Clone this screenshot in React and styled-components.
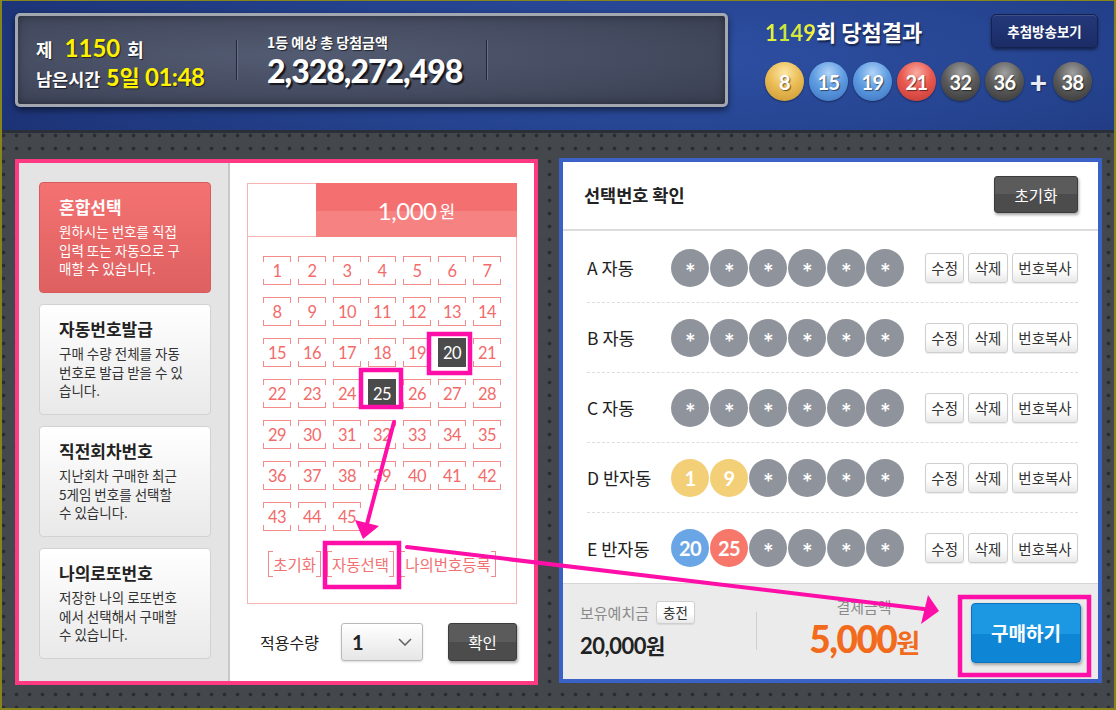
import React from 'react';
import styled, { createGlobalStyle } from 'styled-components';

const KR = `"Noto Sans CJK KR", "Noto Sans", sans-serif`;
const NUM = `Lato, "Noto Sans CJK KR", sans-serif`;

const GlobalStyle = createGlobalStyle`
  html, body { margin: 0; padding: 0; background: #44484d; }
  body { font-family: ${KR}; }
  *, *::before, *::after { box-sizing: border-box; }
  button { font-family: ${KR}; cursor: pointer; }
`;

const Frame = styled.div`
  position: relative;
  width: 1116px;
  height: 710px;
  overflow: hidden;
  border-style: solid;
  border-color: #85851c;
  border-width: 1px 2px 2px 2px;
  background-color: #44484d;
  background-image: radial-gradient(circle at center, #2a2d31 0 1.5px, transparent 2.3px);
  background-size: 13px 13px;
  background-position: -5px -2px;
  display: flex;
  flex-direction: column;
`;

/* ---------------- Header ---------------- */
const Header = styled.header`
  height: 132px;
  flex: none;
  border-bottom: 3px solid #2b2f37;
  background: radial-gradient(ellipse 70% 130% at 62% 45%, #2e50a3 0%, #25438f 50%, #1c3275 100%);
  display: flex;
  align-items: flex-start;
  padding: 12px 16px 0 13px;
`;

const Board = styled.div`
  width: 713px;
  height: 94px;
  border: 3px solid #a3a7b0;
  border-radius: 5px;
  background: radial-gradient(ellipse at 40% 45%, #535b72 0%, #454c61 55%, #393e50 100%);
  box-shadow: 0 3px 7px rgba(0, 0, 0, 0.55), inset 0 0 8px rgba(0, 0, 0, 0.35);
  display: flex;
  align-items: center;
  padding-left: 18px;
`;

const RoundBlock = styled.div`
  width: 200px;
  display: flex;
  flex-direction: column;
  color: #fff;
  font-weight: 700;
  text-shadow: 1px 1px 1px rgba(0, 0, 0, 0.6);
`;

const BoardLine = styled.div`
  display: flex;
  align-items: baseline;
  height: 27px;
  line-height: 27px;
  white-space: nowrap;
`;

const BoardLabel = styled.span`
  font: 700 ${p => p.$size || 17}px ${KR};
  color: #fff;
  margin-right: ${p => p.$mr || 0}px;
`;

const Yellow = styled.span`
  font: 700 ${p => p.$size}px ${NUM};
  color: #fff200;
  margin-right: ${p => p.$mr || 0}px;
  letter-spacing: ${p => p.$ls || 0}px;
`;

const YellowKr = styled.span`
  font: 700 ${p => p.$size}px ${KR};
  color: #fff200;
`;

const BoardDivider = styled.div`
  width: 2px;
  height: 40px;
  background: linear-gradient(to right, #22263a 50%, #6a7084 50%);
  flex: none;
`;

const PrizeBlock = styled.div`
  width: 248px;
  padding-left: 29px;
  display: flex;
  flex-direction: column;
  color: #fff;
`;

const PrizeLabel = styled.div`
  font: 700 14px ${KR};
  line-height: 20px;
  text-shadow: 1px 1px 1px rgba(0, 0, 0, 0.6);
`;

const PrizeAmount = styled.div`
  font: 900 32px ${NUM};
  letter-spacing: -1px;
  line-height: 36px;
  margin-top: 1px;
  text-shadow: 2px 2px 1px #15171f;
`;

const ResultArea = styled.div`
  margin-left: 37px;
  flex: 1;
  display: flex;
  flex-direction: column;
`;

const ResultTop = styled.div`
  height: 35px;
  display: flex;
  align-items: center;
  justify-content: space-between;
`;

const ResultTitle = styled.div`
  font: 700 22px ${KR};
  color: #fff;
  line-height: 30px;
  text-shadow: 1px 2px 2px rgba(0, 0, 0, 0.55);
  white-space: nowrap;
`;

const RoundNo = styled.span`
  font: 700 22px ${NUM};
  background: linear-gradient(to right, #f3f53a, #c6e63a 40%, #f7f23a);
  -webkit-background-clip: text;
  background-clip: text;
  color: transparent;
  text-shadow: none;
`;

const BroadcastBtn = styled.button`
  width: 107px;
  height: 34px;
  border: 1px solid #15224f;
  border-radius: 5px;
  background: linear-gradient(#24387a, #1b2c66);
  color: #fff;
  font-weight: 700;
  font-size: 13.5px;
  box-shadow: 0 2px 3px rgba(0, 0, 0, 0.45), inset 0 1px 0 rgba(255, 255, 255, 0.12);
  padding: 0;
`;

const BallRow = styled.div`
  margin-top: 14px;
  display: flex;
  align-items: center;
  gap: 5px;
`;

const ballBg = {
  gold: 'radial-gradient(circle at 50% 28%, #fde6a6 0%, #ebbd56 45%, #c8942e 100%)',
  blue: 'radial-gradient(circle at 50% 28%, #b2d4f7 0%, #5f9de2 45%, #3a71bf 100%)',
  red: 'radial-gradient(circle at 50% 28%, #f9aca2 0%, #e95950 45%, #c13733 100%)',
  gray: 'radial-gradient(circle at 50% 28%, #a0a0a0 0%, #5a5a5a 48%, #333 100%)',
};

const WinBall = styled.div`
  width: 39px;
  height: 39px;
  border-radius: 50%;
  background: ${p => ballBg[p.$c]};
  box-shadow: 0 1px 2px rgba(0, 0, 0, 0.4);
  display: flex;
  align-items: center;
  justify-content: center;
  font: 700 20px ${NUM};
  color: #fff;
  letter-spacing: -0.5px;
  text-shadow: 1px 1px 1px rgba(0, 0, 0, 0.55);
`;

const Plus = styled.div`
  width: 19px;
  text-align: center;
  font: 900 30px ${NUM};
  line-height: 30px;
  color: #e8ecf5;
  text-shadow: 1px 1px 1px rgba(0, 0, 0, 0.4);
`;

/* ---------------- Main ---------------- */
const Main = styled.main`
  flex: 1;
  display: flex;
  align-items: flex-start;
  gap: 21px;
  padding: 25px 0 0 13px;
`;

const LeftPanel = styled.section`
  margin-top: 1px;
  width: 523px;
  height: 526px;
  border: 4px solid #ff3a82;
  display: flex;
  background: #fff;
`;

const MenuColumn = styled.nav`
  width: 211px;
  flex: none;
  background: #e4e4e4;
  border-right: 2px solid #c8c8c8;
  display: flex;
  flex-direction: column;
  gap: 11px;
  padding: 19px 0 0 20px;
`;

const MenuCard = styled.div`
  width: 172px;
  height: 111px;
  border-radius: 4px;
  border: 1px solid ${p => (p.$active ? '#d85a5a' : '#d2d2d2')};
  background: ${p =>
    p.$active
      ? 'linear-gradient(#f47272, #de6060)'
      : 'linear-gradient(#ffffff, #e9e9e9)'};
  padding: 12px 0 0 19px;
  color: ${p => (p.$active ? '#fff' : '#222')};
`;

const MenuTitle = styled.div`
  font: 700 17px ${KR};
  line-height: 24px;
`;

const MenuDesc = styled.div`
  margin-top: 3px;
  font: 400 13.5px ${KR};
  line-height: 18.5px;
  white-space: nowrap;
  color: ${p => (p.$active ? '#fff' : '#333')};
`;

const PickColumn = styled.div`
  flex: 1;
  background: #fff;
  padding: 20px 17px 0 17px;
  display: flex;
  flex-direction: column;
`;

const PickBox = styled.div`
  height: 421px;
  border: 1px solid #f8b3b3;
  display: flex;
  flex-direction: column;
`;

const PickHead = styled.div`
  height: 53px;
  display: flex;
  border-bottom: 1px solid #f8b3b3;
`;

const PickTabBlank = styled.div`
  width: 68px;
`;

const PriceTab = styled.div`
  flex: 1;
  margin: -1px -1px -1px 0;
  background: linear-gradient(#f47070 0 52%, #f68282 52% 100%);
  display: flex;
  align-items: center;
  justify-content: center;
  color: #fff;
`;

const PriceNum = styled.span`
  font: 400 24px ${NUM};
  letter-spacing: -0.5px;
`;

const PriceUnit = styled.span`
  font: 400 17px ${KR};
  margin-left: 3px;
`;

const NumGrid = styled.div`
  margin-top: 19px;
  display: grid;
  grid-template-columns: repeat(7, 28px);
  grid-auto-rows: 29px;
  column-gap: 7px;
  row-gap: 12px;
  justify-content: center;
`;

const Cell = styled.div`
  position: relative;
  display: flex;
  align-items: center;
  justify-content: center;
  font: 400 16.5px ${NUM};
  letter-spacing: -0.5px;
  color: ${p => (p.$on ? '#fff' : '#f26b6b')};
  background: ${p => (p.$on ? '#4b4b4b' : 'transparent')};
  &::before,
  &::after {
    content: '';
    position: absolute;
    left: 0;
    right: 0;
    height: 6px;
    border: 1px solid #f48c8c;
    display: ${p => (p.$on ? 'none' : 'block')};
  }
  &::before { top: 0; border-bottom: none; }
  &::after { bottom: 0; border-top: none; }
`;

const BracketRow = styled.div`
  margin-top: 20px;
  display: flex;
  justify-content: center;
  gap: 6px;
`;

const BracketBtn = styled.button`
  position: relative;
  height: 26px;
  padding: 0 5px;
  border: 0;
  background: none;
  font: 400 15.5px ${KR};
  line-height: 26px;
  color: #f07272;
  &::before,
  &::after {
    content: '';
    position: absolute;
    top: 0;
    bottom: 0;
    width: 5px;
    border: 1px solid #f38a8a;
  }
  &::before { left: 0; border-right: none; }
  &::after { right: 0; border-left: none; }
`;

const QtyRow = styled.div`
  margin-top: 19px;
  height: 38px;
  display: flex;
  align-items: center;
  padding-left: 13px;
`;

const QtyLabel = styled.span`
  font: 400 16px ${KR};
  color: #222;
  width: 81px;
`;

const QtySelect = styled.div`
  width: 82px;
  height: 38px;
  border: 1px solid #b9b9b9;
  border-radius: 3px;
  background: linear-gradient(#ffffff, #e6e6e6);
  box-shadow: 0 1px 2px rgba(0, 0, 0, 0.15);
  display: flex;
  align-items: center;
  justify-content: space-between;
  padding: 0 10px 0 10px;
  font: 700 20px ${NUM};
  color: #222;
`;

const DarkBtn = styled.button`
  width: ${p => p.$w}px;
  height: ${p => p.$h}px;
  margin-left: ${p => p.$ml || 0}px;
  border: 1px solid #3c3c3c;
  border-radius: 3px;
  background: linear-gradient(#5b5b5b 0 50%, #4c4c4c 50% 100%);
  box-shadow: 1px 2px 3px rgba(0, 0, 0, 0.35);
  color: #fff;
  font-size: 15.5px;
  padding: 0;
`;

const RightPanel = styled.section`
  width: 543px;
  height: 525px;
  border: 4px solid #3a62c6;
  background: #fff;
  display: flex;
  flex-direction: column;
`;

const RightHead = styled.div`
  height: 69px;
  flex: none;
  display: flex;
  align-items: center;
  justify-content: space-between;
  padding: 0 20px 2px 21px;
  border-bottom: 2px solid #dcdcdc;
`;

const RightTitle = styled.h2`
  margin: 0;
  font: 700 17.5px ${KR};
  color: #222;
`;

const GameList = styled.div`
  flex: 1;
  padding: 2px 20px 0 24px;
  display: flex;
  flex-direction: column;
`;

const GameRow = styled.div`
  height: 70px;
  flex: none;
  display: flex;
  align-items: center;
  border-bottom: ${p => (p.$last ? 'none' : '1px dashed #dedede')};
`;

const GameLabel = styled.div`
  width: 84px;
  font: 400 17.5px ${KR};
  color: #222;
`;

const PickBalls = styled.div`
  display: flex;
  gap: 1px;
`;

const pickColor = { star: '#8f949c', yellow: '#f3cf78', blue: '#6aa6e6', red: '#f7776b' };

const PickBall = styled.div`
  width: 38px;
  height: 38px;
  border-radius: 50%;
  background: ${p => pickColor[p.$c]};
  color: #fff;
  display: flex;
  align-items: center;
  justify-content: center;
  font: 700 ${p => (p.$c === 'star' ? 25 : 20)}px ${NUM};
  letter-spacing: -0.5px;
  padding-top: ${p => (p.$c === 'star' ? 8 : 0)}px;
`;

const RowActions = styled.div`
  margin-left: auto;
  display: flex;
  gap: 4px;
`;

const LightBtn = styled.button`
  height: ${p => p.$h || 30}px;
  min-width: ${p => p.$w || 0}px;
  padding: 0 ${p => p.$px || 5}px;
  border: 1px solid #cfcfcf;
  border-radius: 3px;
  background: linear-gradient(#ffffff 0 55%, #e8e8e8 100%);
  box-shadow: 0 1px 1px rgba(0, 0, 0, 0.08);
  font-size: ${p => p.$fs || 14.5}px;
  color: #333;
`;

const PayBar = styled.div`
  height: 96px;
  flex: none;
  background: #ebebeb;
  border-top: 1px solid #d6d6d6;
  display: flex;
  align-items: center;
  padding: 0 17px 0 17px;
`;

const Balance = styled.div`
  width: 176px;
  display: flex;
  flex-direction: column;
  margin-top: -4px;
`;

const BalanceTop = styled.div`
  display: flex;
  align-items: center;
  gap: 7px;
`;

const GrayLabel = styled.span`
  font: 400 15px ${KR};
  color: #8a8a8a;
`;

const BalanceValue = styled.div`
  margin-top: 8px;
  font: 700 22px ${NUM};
  color: #222;
  letter-spacing: -0.5px;
  line-height: 26px;
`;

const Won = styled.span`
  font-family: ${KR};
  font-size: ${p => p.$size}px;
  font-weight: 700;
`;

const VDivider = styled.div`
  width: 1px;
  height: 38px;
  background: #cfcfcf;
  margin-top: -2px;
`;

const PayTotal = styled.div`
  flex: 1;
  display: flex;
  flex-direction: column;
  align-items: center;
  margin-top: -4px;
`;

const PayValue = styled.div`
  margin-top: 1px;
  font: 900 37px ${NUM};
  color: #f26a1c;
  letter-spacing: -1.5px;
  line-height: 42px;
`;

const BuyBtn = styled.button`
  width: 110px;
  height: 60px;
  border: 1px solid #0b72bb;
  border-radius: 4px;
  background: linear-gradient(#1c98e3 0 52%, #0e86d5 52% 100%);
  box-shadow: 1px 2px 3px rgba(0, 0, 0, 0.3);
  color: #fff;
  font-weight: 700;
  font-size: 19px;
  padding: 0;
  margin-top: 2px;
`;

const Overlay = styled.svg`
  position: absolute;
  left: -2px;
  top: -1px;
  width: 1116px;
  height: 710px;
  pointer-events: none;
`;

const Chevron = () => (
  <svg width="14" height="8" viewBox="0 0 14 8">
    <polyline points="1,1 7,7 13,1" fill="none" stroke="#666" strokeWidth="1.6" />
  </svg>
);

const menus = [
  { t: '혼합선택', d: ['원하시는 번호를 직접', '입력 또는 자동으로 구', '매할 수 있습니다.'], active: true },
  { t: '자동번호발급', d: ['구매 수량 전체를 자동', '번호로 발급 받을 수 있', '습니다.'] },
  { t: '직전회차번호', d: ['지난회차 구매한 최근', '5게임 번호를 선택할', '수 있습니다.'] },
  { t: '나의로또번호', d: ['저장한 나의 로또번호', '에서 선택해서 구매할', '수 있습니다.'] },
];

const games = [
  { l: 'A 자동', b: [] },
  { l: 'B 자동', b: [] },
  { l: 'C 자동', b: [] },
  { l: 'D 반자동', b: [{ n: 1, c: 'yellow' }, { n: 9, c: 'yellow' }] },
  { l: 'E 반자동', b: [{ n: 20, c: 'blue' }, { n: 25, c: 'red' }] },
];

const winning = [
  { n: 8, c: 'gold' },
  { n: 15, c: 'blue' },
  { n: 19, c: 'blue' },
  { n: 21, c: 'red' },
  { n: 32, c: 'gray' },
  { n: 36, c: 'gray' },
];

const selected = [20, 25];

export default function App() {
  const nums = Array.from({ length: 45 }, (_, i) => i + 1);
  return (
    <>
      <GlobalStyle />
      <Frame>
        <Header>
          <Board>
            <RoundBlock>
              <BoardLine>
                <BoardLabel $size={18} $mr={12}>제</BoardLabel>
                <Yellow $size={24} $mr={7}>1150</Yellow>
                <BoardLabel $size={18}>회</BoardLabel>
              </BoardLine>
              <BoardLine>
                <BoardLabel $size={17.5} $mr={6}>남은시간</BoardLabel>
                <YellowKr $size={22}>5일</YellowKr>
                <Yellow $size={24} $ls={-0.5}>&nbsp;01:48</Yellow>
              </BoardLine>
            </RoundBlock>
            <BoardDivider />
            <PrizeBlock>
              <PrizeLabel>1등 예상 총 당첨금액</PrizeLabel>
              <PrizeAmount>2,328,272,498</PrizeAmount>
            </PrizeBlock>
            <BoardDivider />
          </Board>
          <ResultArea>
            <ResultTop>
              <ResultTitle>
                <RoundNo>1149</RoundNo>회 당첨결과
              </ResultTitle>
              <BroadcastBtn>추첨방송보기</BroadcastBtn>
            </ResultTop>
            <BallRow>
              {winning.map(b => (
                <WinBall key={b.n} $c={b.c}>{b.n}</WinBall>
              ))}
              <Plus>+</Plus>
              <WinBall $c="gray">38</WinBall>
            </BallRow>
          </ResultArea>
        </Header>

        <Main>
          <LeftPanel>
            <MenuColumn>
              {menus.map(m => (
                <MenuCard key={m.t} $active={m.active}>
                  <MenuTitle>{m.t}</MenuTitle>
                  <MenuDesc $active={m.active}>
                    {m.d.map(line => (
                      <div key={line}>{line}</div>
                    ))}
                  </MenuDesc>
                </MenuCard>
              ))}
            </MenuColumn>
            <PickColumn>
              <PickBox>
                <PickHead>
                  <PickTabBlank />
                  <PriceTab>
                    <PriceNum>1,000</PriceNum>
                    <PriceUnit>원</PriceUnit>
                  </PriceTab>
                </PickHead>
                <NumGrid>
                  {nums.map(n => (
                    <Cell key={n} $on={selected.includes(n)}>{n}</Cell>
                  ))}
                </NumGrid>
                <BracketRow>
                  <BracketBtn>초기화</BracketBtn>
                  <BracketBtn>자동선택</BracketBtn>
                  <BracketBtn>나의번호등록</BracketBtn>
                </BracketRow>
              </PickBox>
              <QtyRow>
                <QtyLabel>적용수량</QtyLabel>
                <QtySelect>
                  1
                  <Chevron />
                </QtySelect>
                <DarkBtn $w={69} $h={38} $ml={25}>확인</DarkBtn>
              </QtyRow>
            </PickColumn>
          </LeftPanel>

          <RightPanel>
            <RightHead>
              <RightTitle>선택번호 확인</RightTitle>
              <DarkBtn $w={84} $h={37}>초기화</DarkBtn>
            </RightHead>
            <GameList>
              {games.map((g, gi) => (
                <GameRow key={g.l} $last={gi === games.length - 1}>
                  <GameLabel>{g.l}</GameLabel>
                  <PickBalls>
                    {Array.from({ length: 6 }, (_, i) => {
                      const b = g.b[i];
                      return b ? (
                        <PickBall key={i} $c={b.c}>{b.n}</PickBall>
                      ) : (
                        <PickBall key={i} $c="star">*</PickBall>
                      );
                    })}
                  </PickBalls>
                  <RowActions>
                    <LightBtn $w={38}>수정</LightBtn>
                    <LightBtn $w={40}>삭제</LightBtn>
                    <LightBtn $w={66}>번호복사</LightBtn>
                  </RowActions>
                </GameRow>
              ))}
            </GameList>
            <PayBar>
              <Balance>
                <BalanceTop>
                  <GrayLabel>보유예치금</GrayLabel>
                  <LightBtn $h={23} $fs={13.5} $w={39}>충전</LightBtn>
                </BalanceTop>
                <BalanceValue>
                  20,000<Won $size={21}>원</Won>
                </BalanceValue>
              </Balance>
              <VDivider />
              <PayTotal>
                <GrayLabel>결제금액</GrayLabel>
                <PayValue>
                  5,000<Won $size={26}>원</Won>
                </PayValue>
              </PayTotal>
              <BuyBtn>구매하기</BuyBtn>
            </PayBar>
          </RightPanel>
        </Main>

        <Overlay viewBox="0 0 1116 710">
          <g fill="none" stroke="#ff0fa8" strokeWidth="4.5">
            <rect x="429" y="334" width="41" height="39" />
            <rect x="361" y="370" width="40" height="37" />
            <rect x="325" y="543" width="74" height="44" />
            <rect x="960" y="597" width="129" height="78" />
          </g>
          <g stroke="#ff0fa8" strokeWidth="4" strokeLinecap="round">
            <line x1="394" y1="422" x2="367" y2="524" />
            <line x1="407" y1="547" x2="924" y2="609" />
          </g>
          <g fill="#ff0fa8">
            <polygon points="363,539 355,520 379,526" />
            <polygon points="939,611 921,624 928,595" />
          </g>
        </Overlay>
      </Frame>
    </>
  );
}
